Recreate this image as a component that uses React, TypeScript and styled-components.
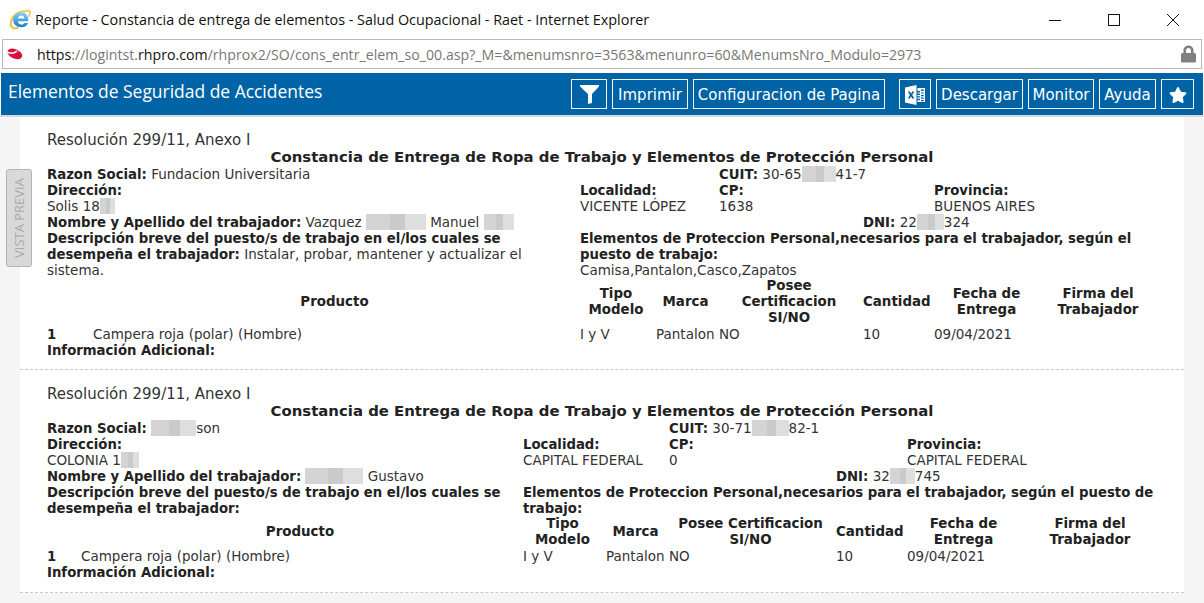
import * as React from 'react'
import styled, { createGlobalStyle } from 'styled-components'
import { FaStar, FaLock } from 'react-icons/fa'

const COLS_A = '42px 483px 72px 59px 140px 67px 105px 110px'
const COLS_B = '30px 438px 79px 59px 163px 67px 113px 132px'

const GlobalStyle = createGlobalStyle`
  html, body {
    margin: 0;
    padding: 0;
    height: 100%;
    overflow: hidden;
    background: #fff;
  }
`

function IeIcon() {
  return (
    <svg width="21" height="21" viewBox="0 0 21 21">
      <defs>
        <linearGradient id="ie-blue" x1="0" y1="0" x2="0" y2="1">
          <stop offset="0" stopColor="#7fd0f5" />
          <stop offset="1" stopColor="#1c7ccc" />
        </linearGradient>
      </defs>
      <path
        d="M15 2.6C9.6 1 2.2 6.4.9 13.8c-.8 4.8 2.8 7 7.6 4.4"
        fill="none"
        stroke="#f0b93a"
        strokeWidth="1.8"
      />
      <path
        d="M15 2.6c2.8-1.6 5.4-1.2 5 1.6-.2 1.4-.8 2.6-1.6 3.6"
        fill="none"
        stroke="#f0b93a"
        strokeWidth="1.4"
      />
      <path
        d="M3.2 11.6c0-4.8 3.4-8 7.8-8 4.6 0 7.6 3.4 7.2 8.6H7.9c.1 2 1.5 3.2 3.5 3.2 1.4 0 2.4-.5 3-1.5h3.7c-1 2.8-3.6 4.4-6.8 4.4-4.8 0-8.1-2.8-8.1-6.7zm4.8-2.2h6.4c-.1-1.7-1.4-2.9-3.2-2.9s-3 1.2-3.2 2.9z"
        fill="url(#ie-blue)"
        fillRule="evenodd"
      />
    </svg>
  )
}

function SiteLogo() {
  return (
    <svg width="17" height="12" viewBox="0 0 17 12">
      <path d="M1 3.4C2.4.6 6-.2 9.6 1.2c3.8 1.5 7 4 6.6 6.8-.5 3-4.4 4-8.2 2.6C4.6 9.4 1.9 6.8 1 3.4z" fill="#d8123c" />
      <path d="M.5 3.4c3 2.6 8 2.2 10.5-.4" fill="none" stroke="#fff" strokeWidth="1.5" />
    </svg>
  )
}

function FilterIcon() {
  return (
    <svg width="19" height="19" viewBox="0 0 19 19">
      <path d="M0 0h19v1.5l-7 7.5v9l-4 1V9L0 1.5z" fill="#fff" />
    </svg>
  )
}

function ExcelIcon() {
  return (
    <svg width="22" height="22" viewBox="0 0 22 22">
      <path d="M1 3.5L12.5 1v20L1 18.5z" fill="#fff" />
      <path d="M3.8 7.4h2.2l1.1 2.3 1.2-2.3h2l-2.1 3.6 2.1 3.6H8.1L7 12.3l-1.1 2.3H3.8l2.1-3.6z" fill="#0063a6" />
      <path
        d="M13.5 4H21v14h-7.5v-1.8h2.5v-1.4h-2.5v-1.2h2.5v-1.4h-2.5V11h2.5V9.6h-2.5V8.4h2.5V7h-2.5zM17 5.6v1.4h2.8V5.6zM17 8.4v1.2h2.8V8.4zM17 11v1.2h2.8V11zM17 13.6v1.2h2.8v-1.2zM17 16v1.2h2.8V16z"
        fill="#fff"
        fillRule="evenodd"
      />
    </svg>
  )
}

function Redacted({ w }: { w: number }) {
  return <RedactBlock $w={w} />
}

type ReportData = {
  cols: string
  razon: React.ReactNode
  cuit: React.ReactNode
  direccion: React.ReactNode
  localidad: string
  cp: string
  provincia: string
  nombre: React.ReactNode
  dni: React.ReactNode
  descripcion?: string
  elementos?: string
  poseeHeader: React.ReactNode
}

const REPORTS: ReportData[] = [
  {
    cols: COLS_A,
    razon: 'Fundacion Universitaria',
    cuit: (
      <>
        30-65
        <Redacted w={34} />
        41-7
      </>
    ),
    direccion: (
      <>
        Solis 18
        <Redacted w={15} />
      </>
    ),
    localidad: 'VICENTE LÓPEZ',
    cp: '1638',
    provincia: 'BUENOS AIRES',
    nombre: (
      <>
        Vazquez <Redacted w={60} /> Manuel <Redacted w={30} />
      </>
    ),
    dni: (
      <>
        22
        <Redacted w={27} />
        324
      </>
    ),
    descripcion: 'Instalar, probar, mantener y actualizar el sistema.',
    elementos: 'Camisa,Pantalon,Casco,Zapatos',
    poseeHeader: (
      <>
        Posee
        <br />
        Certificacion
        <br />
        SI/NO
      </>
    ),
  },
  {
    cols: COLS_B,
    razon: (
      <>
        <Redacted w={45} />
        son
      </>
    ),
    cuit: (
      <>
        30-71
        <Redacted w={37} />
        82-1
      </>
    ),
    direccion: (
      <>
        COLONIA 1
        <Redacted w={18} />
      </>
    ),
    localidad: 'CAPITAL FEDERAL',
    cp: '0',
    provincia: 'CAPITAL FEDERAL',
    nombre: (
      <>
        <Redacted w={58} /> Gustavo
      </>
    ),
    dni: (
      <>
        32
        <Redacted w={25} />
        745
      </>
    ),
    poseeHeader: (
      <>
        Posee Certificacion
        <br />
        SI/NO
      </>
    ),
  },
]

function Report({ data }: { data: ReportData }) {
  return (
    <ReportBlock $cols={data.cols}>
      <Resolution>Resolución 299/11, Anexo I</Resolution>
      <ReportTitle>Constancia de Entrega de Ropa de Trabajo y Elementos de Protección Personal</ReportTitle>

      <Row>
        <Cell $col={1} $span={4}>
          <b>Razon Social:</b> {data.razon}
        </Cell>
        <Cell $col={5} $span={4}>
          <b>CUIT:</b> {data.cuit}
        </Cell>
      </Row>
      <Row>
        <Cell $col={1} $span={2}>
          <b>Dirección:</b>
          <br />
          {data.direccion}
        </Cell>
        <Cell $col={3} $span={2}>
          <b>Localidad:</b>
          <br />
          {data.localidad}
        </Cell>
        <Cell $col={5} $span={2}>
          <b>CP:</b>
          <br />
          {data.cp}
        </Cell>
        <Cell $col={7} $span={2}>
          <b>Provincia:</b>
          <br />
          {data.provincia}
        </Cell>
      </Row>
      <Row>
        <Cell $col={1} $span={5}>
          <b>Nombre y Apellido del trabajador:</b> {data.nombre}
        </Cell>
        <Cell $col={6} $span={3}>
          <b>DNI:</b> {data.dni}
        </Cell>
      </Row>
      <Row>
        <Cell $col={1} $span={2}>
          <b>Descripción breve del puesto/s de trabajo en el/los cuales se desempeña el trabajador:</b>
          {data.descripcion ? ` ${data.descripcion}` : ''}
        </Cell>
        <Cell $col={3} $span={6}>
          <b>Elementos de Proteccion Personal,necesarios para el trabajador, según el puesto de trabajo:</b>
          {data.elementos && <br />}
          {data.elementos}
        </Cell>
      </Row>

      <Row>
        <HeadCell $col={2}>Producto</HeadCell>
        <HeadCell $col={3}>
          Tipo
          <br />
          Modelo
        </HeadCell>
        <HeadCell $col={4}>Marca</HeadCell>
        <HeadCell $col={5}>{data.poseeHeader}</HeadCell>
        <HeadCell $col={6}>Cantidad</HeadCell>
        <HeadCell $col={7}>
          Fecha de
          <br />
          Entrega
        </HeadCell>
        <HeadCell $col={8}>
          Firma del
          <br />
          Trabajador
        </HeadCell>
      </Row>
      <Row>
        <Cell $col={1}>
          <b>1</b>
        </Cell>
        <Cell $col={2}>Campera roja (polar) (Hombre)</Cell>
        <Cell $col={3}>I y V</Cell>
        <Cell $col={4}>Pantalon</Cell>
        <Cell $col={5}>NO</Cell>
        <Cell $col={6}>10</Cell>
        <Cell $col={7}>09/04/2021</Cell>
      </Row>
      <Row>
        <Cell $col={1} $span={2}>
          <b>Información Adicional:</b>
        </Cell>
      </Row>
    </ReportBlock>
  )
}

export default function App() {
  return (
    <Win>
      <GlobalStyle />
      <TitleBar>
        <IeIcon />
        <WindowTitle>Reporte - Constancia de entrega de elementos - Salud Ocupacional - Raet - Internet Explorer</WindowTitle>
        <WindowControls>
          <svg width="14" height="14" viewBox="0 0 14 14">
            <path d="M1 7.5h12" stroke="#111" strokeWidth="1" />
          </svg>
          <svg width="14" height="14" viewBox="0 0 14 14">
            <rect x="1.5" y="1.5" width="11" height="11" fill="none" stroke="#111" strokeWidth="1" />
          </svg>
          <svg width="14" height="14" viewBox="0 0 14 14">
            <path d="M1 1l12 12M13 1L1 13" stroke="#111" strokeWidth="1" />
          </svg>
        </WindowControls>
      </TitleBar>

      <AddressBar>
        <SiteLogo />
        <Url>
          <em>https</em>://logintst.<em>rhpro.com</em>/rhprox2/SO/cons_entr_elem_so_00.asp?_M=&amp;menumsnro=3563&amp;menunro=60&amp;MenumsNro_Modulo=2973
        </Url>
        <LockIcon />
      </AddressBar>

      <Toolbar>
        <ToolbarTitle>Elementos de Seguridad de Accidentes</ToolbarTitle>
        <ToolButton $w={36}>
          <FilterIcon />
        </ToolButton>
        <ToolButton $w={76}>Imprimir</ToolButton>
        <ToolButton $w={192}>Configuracion de Pagina</ToolButton>
        <ToolButton $w={32} $gapLeft={9}>
          <ExcelIcon />
        </ToolButton>
        <ToolButton $w={87}>Descargar</ToolButton>
        <ToolButton $w={66}>Monitor</ToolButton>
        <ToolButton $w={57}>Ayuda</ToolButton>
        <ToolButton $w={33}>
          <FaStar size={18} />
        </ToolButton>
      </Toolbar>

      <Content>
        <PreviewTab>VISTA PREVIA</PreviewTab>
        <Sheet>
          {REPORTS.map((r, i) => (
            <Report key={i} data={r} />
          ))}
        </Sheet>
      </Content>
    </Win>
  )
}

const Win = styled.div`
  width: 1204px;
  height: 603px;
  display: flex;
  flex-direction: column;
  overflow: hidden;
  background: #fff;
`

const TitleBar = styled.div`
  height: 39px;
  flex: none;
  display: flex;
  align-items: center;
  padding-left: 10px;
  box-sizing: border-box;
`

const WindowTitle = styled.div`
  margin-left: 4px;
  font-family: 'Open Sans', 'Noto Sans', sans-serif;
  font-size: 14.37px;
  color: #111;
  white-space: nowrap;
`

const WindowControls = styled.div`
  margin-left: auto;
  padding-right: 24px;
  display: flex;
  gap: 45px;
`

const AddressBar = styled.div`
  height: 30px;
  flex: none;
  margin: 0 2px;
  box-sizing: border-box;
  border: 1px solid #b9b9b9;
  display: flex;
  align-items: center;
  padding: 0 5px 0 3px;
`

const Url = styled.div`
  margin-left: 14px;
  font-family: 'Open Sans', 'Noto Sans', sans-serif;
  font-size: 14.18px;
  color: #777;
  white-space: nowrap;

  em {
    font-style: normal;
    color: #111;
  }
`

const LockIcon = styled(FaLock)`
  margin-left: auto;
  width: 15px;
  height: 18px;
  color: #808080;
`

const Toolbar = styled.div`
  height: 42px;
  flex: none;
  margin: 4px 1px 0;
  padding-right: 9px;
  background: #0063a6;
  display: flex;
  align-items: center;
  gap: 5px;
`

const ToolbarTitle = styled.div`
  margin-right: auto;
  padding: 0 0 7px 7px;
  font-family: 'Open Sans', 'Noto Sans', sans-serif;
  font-size: 17.45px;
  color: #fff;
  white-space: nowrap;
`

const ToolButton = styled.div<{ $w: number; $gapLeft?: number }>`
  width: ${p => p.$w}px;
  height: 30px;
  box-sizing: border-box;
  border: 1px solid #f2f6fa;
  padding-top: 1px;
  margin-left: ${p => p.$gapLeft ?? 0}px;
  display: flex;
  align-items: center;
  justify-content: center;
  font-family: 'DejaVu Sans', Verdana, sans-serif;
  font-size: 15px;
  color: #fff;
  white-space: nowrap;
`

const Content = styled.div`
  flex: 1;
  min-height: 0;
  position: relative;
  background: #f5f5f5;
  border-top: 2px solid #d3d8dc;
  padding: 0 20px;
`

const PreviewTab = styled.div`
  position: absolute;
  left: 6px;
  top: 52px;
  width: 26px;
  height: 98px;
  box-sizing: border-box;
  background: #d9d9d9;
  border: 1px solid #b5b5b5;
  border-radius: 3px;
  display: flex;
  align-items: center;
  justify-content: center;
  writing-mode: vertical-rl;
  transform: rotate(180deg);
  font-family: 'Open Sans', 'Noto Sans', sans-serif;
  font-size: 13px;
  color: #a8a8a8;
`

const Sheet = styled.div`
  background: #fff;
`

const ReportBlock = styled.div<{ $cols: string }>`
  --cols: ${p => p.$cols};
  padding: 16px 27px 11px;
  border-bottom: 1px dashed #c8c8c8;
  font-family: 'DejaVu Sans', Verdana, sans-serif;
  font-size: 13.5px;
  line-height: 16px;
  color: #333;

  b {
    font-size: 13.25px;
    line-height: 0;
    color: #222;
  }

  &:first-child {
    padding-top: 15px;
  }

  &:last-child {
    padding-bottom: 12px;
  }
`

const Resolution = styled.div`
  font-size: 15px;
  margin-bottom: 1px;
`

const ReportTitle = styled.div`
  font-size: 14.9px;
  font-weight: bold;
  color: #222;
  text-align: center;
  margin-bottom: 1px;
`

const Row = styled.div`
  display: grid;
  grid-template-columns: var(--cols);
  column-gap: 4px;
`

const Cell = styled.div<{ $col: number; $span?: number }>`
  grid-column: ${p => p.$col} / span ${p => p.$span ?? 1};
  white-space: normal;
`

const HeadCell = styled(Cell)`
  font-size: 13.4px;
  font-weight: bold;
  color: #222;
  text-align: center;
  align-self: center;
`

const RedactBlock = styled.span<{ $w: number }>`
  display: inline-block;
  width: ${p => p.$w}px;
  height: 16px;
  vertical-align: top;
  background: linear-gradient(90deg, #d4d4d4 0 40%, #c9cacb 40% 65%, #dedede 65%);
`
